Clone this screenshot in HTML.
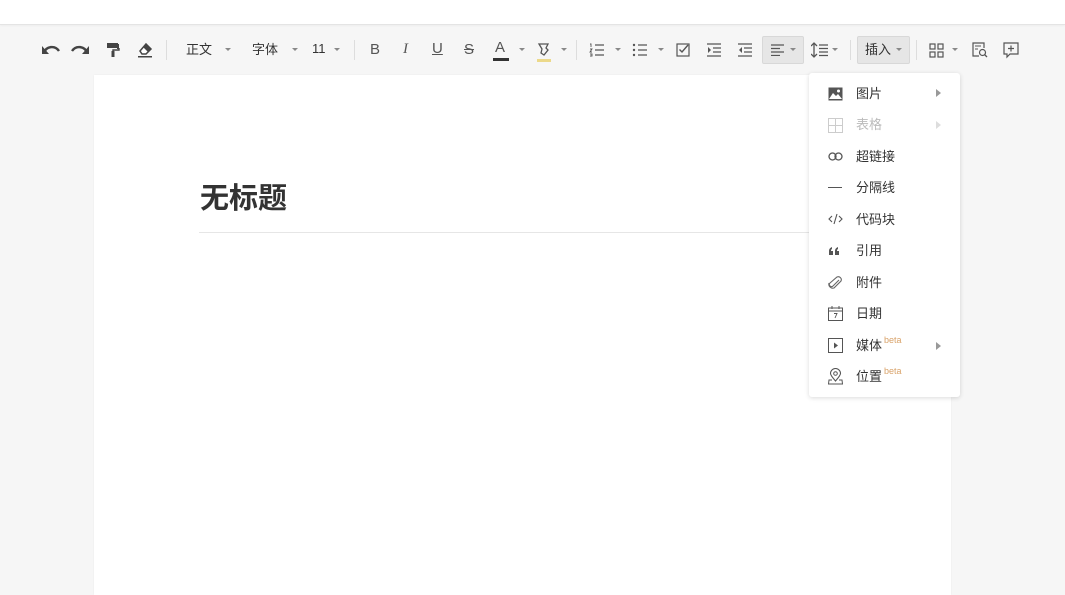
<!DOCTYPE html>
<html><head><meta charset="utf-8"><style>
*{margin:0;padding:0;box-sizing:border-box}
body{width:1065px;height:586px;overflow:hidden;background:#f6f6f6;font-family:"Liberation Sans","Noto Sans CJK SC",sans-serif;position:relative;color:#333}
.top{position:absolute;left:0;top:0;width:1065px;height:25px;background:#fff;border-bottom:1px solid #e4e4e4;box-shadow:0 1px 2px rgba(0,0,0,.04)}
.a{position:absolute}
.t{position:absolute;font-size:13px;color:#333;top:39px}
.car{position:absolute;top:48px;width:0;height:0;border-left:3px solid transparent;border-right:3px solid transparent;border-top:3px solid #888}
.sep{position:absolute;top:40px;width:1px;height:20px;background:#ddd}
.hl{position:absolute;top:36px;height:28px;background:#e6e6e6;border:1px solid #d8d8d8;border-radius:2px}
.page{position:absolute;left:94px;top:75px;width:857px;height:520px;background:#fff;box-shadow:0 0 2px rgba(0,0,0,.05)}
.menu{position:absolute;left:809px;top:73px;width:151px;height:324px;background:#fff;border-radius:3px;box-shadow:0 1px 5px rgba(0,0,0,.15)}
.mi{position:absolute;left:47px;font-size:13px;color:#333}
.ic{position:absolute;left:19px}
.beta{font-size:9px;color:#d9a36a;position:relative;top:-7px;margin-left:2px}
.arr{position:absolute;left:127px;width:0;height:0;border-top:4px solid transparent;border-bottom:4px solid transparent;border-left:5px solid #999}
</style></head><body>
<div class="top"></div>

<svg class="a" style="left:41px;top:42px" width="20" height="14" viewBox="0 0 20 14"><path d="M3 11 C5 4,14 3,18 9" fill="none" stroke="#444" stroke-width="2.4"/><path d="M1 4 L1 12 L8 12 Z" fill="#444"/></svg>
<svg class="a" style="left:70px;top:42px" width="20" height="14" viewBox="0 0 20 14"><path d="M17 11 C15 4,6 3,2 9" fill="none" stroke="#444" stroke-width="2.4"/><path d="M19 4 L19 12 L12 12 Z" fill="#444"/></svg>
<svg class="a" style="left:106px;top:42px" width="14" height="16" viewBox="0 0 14 16"><rect x="1" y="1" width="11" height="5" fill="#444"/><rect x="11" y="2" width="2" height="5" fill="#444"/><path d="M13 6 V8 H7 V9" fill="none" stroke="#444" stroke-width="1.4"/><rect x="5.5" y="9" width="3" height="6" fill="#444"/></svg>
<svg class="a" style="left:137px;top:41px" width="16" height="17" viewBox="0 0 16 17"><path d="M3 10 L9 3 L14 8 L9 13 H5 Z" fill="#fff" stroke="#444" stroke-width="1.5"/><path d="M9 3 L14 8 L11 11 L6 6 Z" fill="#444"/><rect x="1" y="15" width="14" height="1.5" fill="#444"/></svg>
<div class="sep" style="left:166px"></div>
<div class="t" style="left:186px">正文</div><div class="car" style="left:225px"></div>
<div class="t" style="left:252px">字体</div><div class="car" style="left:292px"></div>
<div class="t" style="left:312px;top:41px;color:#333">11</div><div class="car" style="left:334px"></div>
<div class="sep" style="left:354px"></div>
<div class="t" style="left:370px;font-size:15px;top:41px;color:#555">B</div>
<div class="t" style="left:403px;font-size:15px;top:41px;color:#555;font-family:'Liberation Serif',serif;font-style:italic">I</div>
<div class="t" style="left:432px;font-size:15px;top:40px;color:#555;text-decoration:underline">U</div>
<div class="t" style="left:464px;font-size:15px;top:41px;color:#555;text-decoration:line-through">S</div>
<div class="t" style="left:495px;font-size:15px;top:39px;color:#555">A</div><div class="a" style="left:493px;top:58px;width:16px;height:3px;background:#333"></div><div class="car" style="left:519px"></div>
<svg class="a" style="left:536px;top:42px" width="16" height="20" viewBox="0 0 16 20"><path d="M3 2 H12 L10 6 L12 8 L8 13 L5 11 L6 7 Z" fill="none" stroke="#555" stroke-width="1.3"/><rect x="1" y="17" width="14" height="3" fill="#ecd98a"/></svg><div class="car" style="left:561px"></div>
<div class="sep" style="left:576px"></div>
<svg class="a" style="left:589px;top:43px" width="16" height="14" viewBox="0 0 16 14"><path d="M6 2 H15 M6 7 H15 M6 12 H15" stroke="#555" stroke-width="1.2"/><path d="M1 1 L2 1 V4 M1 6 H3 L1 9 H3 M1 11 H3 V13 H1" fill="none" stroke="#555" stroke-width="0.9"/></svg><div class="car" style="left:615px"></div>
<svg class="a" style="left:632px;top:43px" width="16" height="14" viewBox="0 0 16 14"><path d="M6 2 H15 M6 7 H15 M6 12 H15" stroke="#555" stroke-width="1.2"/><circle cx="2" cy="2" r="1.2" fill="#555"/><circle cx="2" cy="7" r="1.2" fill="#555"/><circle cx="2" cy="12" r="1.2" fill="#555"/></svg><div class="car" style="left:658px"></div>
<svg class="a" style="left:676px;top:43px" width="14" height="14" viewBox="0 0 14 14"><rect x="1" y="1" width="12" height="12" fill="none" stroke="#555" stroke-width="1.2"/><path d="M3.5 6.5 L6 9 L12 2" fill="none" stroke="#555" stroke-width="1.4"/></svg>
<svg class="a" style="left:707px;top:43px" width="14" height="14" viewBox="0 0 14 14"><path d="M0 1 H14 M6 5 H14 M6 9 H14 M0 13 H14" stroke="#555" stroke-width="1.2"/><path d="M1 4 L4 7 L1 10 Z" fill="#555"/></svg>
<svg class="a" style="left:738px;top:43px" width="14" height="14" viewBox="0 0 14 14"><path d="M0 1 H14 M6 5 H14 M6 9 H14 M0 13 H14" stroke="#555" stroke-width="1.2"/><path d="M4 4 L1 7 L4 10 Z" fill="#555"/></svg>
<div class="hl" style="left:762px;width:42px"></div>
<svg class="a" style="left:771px;top:44px" width="14" height="12" viewBox="0 0 14 12"><path d="M0 1 H13 M0 4.5 H9 M0 8 H13 M0 11.5 H9" stroke="#555" stroke-width="1.2"/></svg><div class="car" style="left:790px"></div>
<svg class="a" style="left:811px;top:42px" width="18" height="16" viewBox="0 0 18 16"><path d="M3 2 V14" stroke="#555" stroke-width="1.3"/><path d="M0 4 L3 1 L6 4 M0 12 L3 15 L6 12" fill="none" stroke="#555" stroke-width="1.3"/><path d="M8 3 H17 M8 6.5 H17 M8 10 H17 M8 13.5 H17" stroke="#555" stroke-width="1.2"/></svg><div class="car" style="left:832px"></div>
<div class="sep" style="left:850px"></div>
<div class="hl" style="left:857px;width:53px"></div>
<div class="t" style="left:865px">插入</div><div class="car" style="left:896px"></div>
<div class="sep" style="left:916px"></div>
<svg class="a" style="left:929px;top:43px" width="15" height="15" viewBox="0 0 15 15"><rect x="1" y="1" width="5" height="5" fill="none" stroke="#555" stroke-width="1.2"/><rect x="9" y="1" width="5" height="5" fill="none" stroke="#555" stroke-width="1.2"/><rect x="1" y="9" width="5" height="5" fill="none" stroke="#555" stroke-width="1.2"/><rect x="9" y="9" width="5" height="5" fill="none" stroke="#555" stroke-width="1.2"/></svg><div class="car" style="left:952px"></div>
<svg class="a" style="left:972px;top:42px" width="16" height="16" viewBox="0 0 16 16"><path d="M7 14 H1 V1 H12 V6" fill="none" stroke="#555" stroke-width="1.2"/><path d="M3 4 H9 M3 7 H6" stroke="#555" stroke-width="1.1"/><circle cx="10.5" cy="10.5" r="3" fill="none" stroke="#555" stroke-width="1.2"/><path d="M12.5 12.5 L15 15" stroke="#555" stroke-width="1.3"/></svg>
<svg class="a" style="left:1003px;top:42px" width="16" height="17" viewBox="0 0 16 17"><path d="M1 1 H15 V12 H7 L4 15 V12 H1 Z" fill="none" stroke="#555" stroke-width="1.2"/><path d="M8 3.5 V9.5 M5 6.5 H11" stroke="#555" stroke-width="1.2"/></svg>

<div class="page">
  <div class="a" style="left:106px;top:100px;font-size:29px;font-weight:bold;color:#333">无标题</div>
  <div class="a" style="left:105px;top:157px;width:720px;height:1px;background:#e6e6e6"></div>
</div>

<div class="menu">
  <svg class="ic" style="top:14px" width="15" height="14" viewBox="0 0 15 14"><rect x="0.5" y="0.5" width="14" height="13" fill="#555"/><path d="M1 12 L5 6 L8 9 L10 7 L14 12 Z" fill="#fff"/><circle cx="10.5" cy="4" r="1.5" fill="#fff"/></svg>
  <div class="mi" style="top:10px">图片</div><div class="arr" style="top:16px"></div>
  <svg class="ic" style="top:45px" width="15" height="15" viewBox="0 0 15 15"><rect x="0.5" y="0.5" width="14" height="14" fill="none" stroke="#ccc"/><path d="M7.5 0 V15 M0 7.5 H15" stroke="#ccc"/></svg>
  <div class="mi" style="top:41px;color:#bbb">表格</div><div class="arr" style="top:48px;border-left-color:#ddd"></div>
  <svg class="ic" style="top:79px" width="15" height="9" viewBox="0 0 15 9"><rect x="1" y="1" width="7" height="7" rx="3.5" fill="none" stroke="#555" stroke-width="1.3"/><rect x="7" y="1" width="7" height="7" rx="3.5" fill="none" stroke="#555" stroke-width="1.3"/></svg>
  <div class="mi" style="top:73px">超链接</div>
  <div class="ic" style="top:114px;width:14px;height:1.3px;background:#555"></div>
  <div class="mi" style="top:104px">分隔线</div>
  <svg class="ic" style="top:140px" width="15" height="12" viewBox="0 0 15 12"><path d="M4 3 L1 6 L4 9 M11 3 L14 6 L11 9 M9 1 L6 11" fill="none" stroke="#555" stroke-width="1.1"/></svg>
  <div class="mi" style="top:136px">代码块</div>
  <svg class="ic" style="top:174px" width="12" height="8" viewBox="0 0 12 8"><path d="M1 8 V4 C1 2,2 1,4 0 L4 2 C3 2.5,3 3,3 4 H5 V8 Z M7 8 V4 C7 2,8 1,10 0 L10 2 C9 2.5,9 3,9 4 H11 V8 Z" fill="#555"/></svg>
  <div class="mi" style="top:167px">引用</div>
  <svg class="ic" style="top:202px" width="15" height="16" viewBox="0 0 15 16"><path d="M11 5 L5 11 A2 2 0 0 1 2 8 L9 2 A3 3 0 0 1 13 6 L6 13 A4 4 0 0 1 1 8" fill="none" stroke="#666" stroke-width="1.1"/></svg>
  <div class="mi" style="top:199px">附件</div>
  <svg class="ic" style="top:233px" width="15" height="15" viewBox="0 0 15 15"><rect x="0.5" y="2" width="14" height="12.5" fill="none" stroke="#555"/><path d="M0.5 5 H14.5 M4 0 V3 M11 0 V3" stroke="#555"/><path d="M6 7.5 H9 L7 12" fill="none" stroke="#555" stroke-width="0.9"/></svg>
  <div class="mi" style="top:230px">日期</div>
  <svg class="ic" style="top:265px" width="15" height="15" viewBox="0 0 15 15"><rect x="0.5" y="0.5" width="14" height="14" fill="none" stroke="#555"/><path d="M6 4.5 L10 7.5 L6 10.5 Z" fill="#555"/></svg>
  <div class="mi" style="top:262px">媒体<span class="beta">beta</span></div><div class="arr" style="top:269px"></div>
  <svg class="ic" style="top:295px" width="15" height="17" viewBox="0 0 15 17"><path d="M7.5 13 C4 9,2.5 7,2.5 5.5 A5 5 0 0 1 12.5 5.5 C12.5 7,11 9,7.5 13 Z" fill="none" stroke="#555" stroke-width="1.1"/><circle cx="7.5" cy="5.5" r="1.8" fill="none" stroke="#555"/><path d="M4 12 H1 L0.5 16 H14.5 L14 12 H11" fill="none" stroke="#555"/></svg>
  <div class="mi" style="top:293px">位置<span class="beta">beta</span></div>
</div>
</body></html>
